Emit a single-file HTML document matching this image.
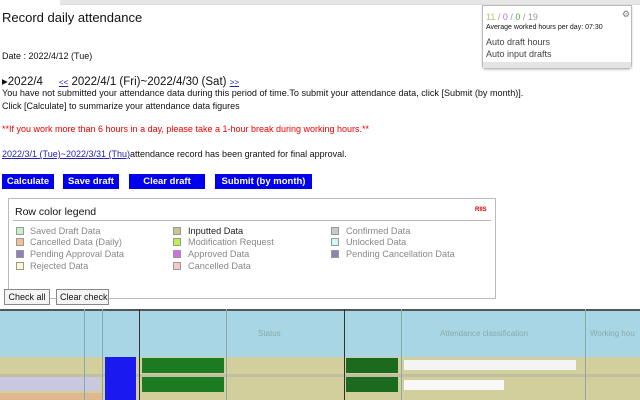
<!DOCTYPE html>
<html><head><meta charset="utf-8"><style>
*{margin:0;padding:0;box-sizing:border-box}
body{width:640px;height:400px;overflow:hidden;background:#fff;font-family:"Liberation Sans",sans-serif;color:#111;position:relative;font-size:9px}
.a{position:absolute;white-space:nowrap}
.btn{position:absolute;background:#0000ee;color:#fff;font-weight:bold;font-size:9.5px;text-align:center;line-height:15px;height:15px;white-space:nowrap}
.sw{position:absolute;width:8px;height:8px;border:1px solid #999}
.lt{position:absolute;color:#888;font-size:9.2px;white-space:nowrap}
.cb{position:absolute;border:1px solid #888;background:#f4f4f4;font-size:9px;line-height:14px;height:16px;padding:0 3px;white-space:nowrap;text-align:center}
.v{position:absolute;top:309px;width:1px;height:91px;background:#8aa}
a{color:#22b;text-decoration:underline}
</style></head><body>
<div class="a" style="left:60px;top:0;width:580px;height:5px;background:#e6e6e6;border-bottom:1px solid #ddd"></div>
<div class="a" style="left:482px;top:5px;width:150px;height:64px;border:1px solid #bbb;border-radius:0 0 4px 4px;background:#fff;box-shadow:0 1px 2px #ccc"></div>
<div class="a" style="left:483px;top:62px;width:148px;height:6px;background:#e4e4e4"></div>
<div class="a" style="left:486px;top:12px;font-size:9px;color:#999"><span style="color:#aac87a">11</span> / <span style="color:#b070e0">0</span> / <span style="color:#5a5">0</span> / 19</div>
<div class="a" style="left:622px;top:9px;font-size:9px;color:#777">⚙</div>
<div class="a" style="left:486px;top:24px;font-size:7px">Average worked hours per day: 07:30</div>
<div class="a" style="left:486px;top:37px;font-size:9px;color:#444">Auto draft hours</div>
<div class="a" style="left:486px;top:49px;font-size:9px;color:#444">Auto input drafts</div>

<div class="a" style="left:2px;top:10px;font-size:13px">Record daily attendance</div>
<div class="a" style="left:2px;top:51px;font-size:9px">Date : 2022/4/12 (Tue)</div>
<div class="a" style="left:2px;top:74px;font-size:11.5px">▸2022/4 &nbsp;&nbsp;&nbsp; <a style="font-size:8px">&lt;&lt;</a> 2022/4/1 (Fri)~2022/4/30 (Sat) <a style="font-size:8px">&gt;&gt;</a></div>
<div class="a" style="left:2px;top:88px;font-size:9.1px">You have not submitted your attendance data during this period of time.To submit your attendance data, click [Submit (by month)].</div>
<div class="a" style="left:2px;top:101px">Click [Calculate] to summarize your attendance data figures</div>
<div class="a" style="left:2px;top:124px;color:#e00">**If you work more than 6 hours in a day, please take a 1-hour break during working hours.**</div>
<div class="a" style="left:2px;top:149px"><a>2022/3/1 (Tue)~2022/3/31 (Thu)</a>attendance record has been granted for final approval.</div>

<div class="btn" style="left:2px;top:174px;width:52px">Calculate</div>
<div class="btn" style="left:63px;top:174px;width:56px">Save draft</div>
<div class="btn" style="left:129px;top:174px;width:76px">Clear draft</div>
<div class="btn" style="left:215px;top:174px;width:97px">Submit (by month)</div>

<div class="a" style="left:8px;top:198px;width:488px;height:101px;border:1px solid #bbb"></div>
<div class="a" style="left:15px;top:206px;font-size:10.5px">Row color legend</div>
<div class="a" style="left:475px;top:207px;font-size:6px;color:#c00;font-weight:bold">RIIS</div>
<div class="a" style="left:13px;top:220px;width:478px;height:1px;background:#bbb"></div>
<div class="sw" style="left:16px;top:227px;background:#c8f0c8"></div><div class="lt" style="left:30px;top:226px">Saved Draft Data</div>
<div class="sw" style="left:16px;top:238px;background:#f0c090"></div><div class="lt" style="left:30px;top:237px">Cancelled Data (Daily)</div>
<div class="sw" style="left:16px;top:250px;background:#9080c0"></div><div class="lt" style="left:30px;top:249px">Pending Approval Data</div>
<div class="sw" style="left:16px;top:262px;background:#fff8c8"></div><div class="lt" style="left:30px;top:261px">Rejected Data</div>
<div class="sw" style="left:173px;top:227px;background:#c8c490"></div><div class="lt" style="left:188px;top:226px;color:#222">Inputted Data</div>
<div class="sw" style="left:173px;top:238px;background:#c0f050"></div><div class="lt" style="left:188px;top:237px">Modification Request</div>
<div class="sw" style="left:173px;top:250px;background:#d070e0"></div><div class="lt" style="left:188px;top:249px">Approved Data</div>
<div class="sw" style="left:173px;top:262px;background:#f8c8c8"></div><div class="lt" style="left:188px;top:261px">Cancelled Data</div>
<div class="sw" style="left:331px;top:227px;background:#c8c8c8"></div><div class="lt" style="left:346px;top:226px">Confirmed Data</div>
<div class="sw" style="left:331px;top:238px;background:#d0f8f8"></div><div class="lt" style="left:346px;top:237px">Unlocked Data</div>
<div class="sw" style="left:331px;top:250px;background:#9080b8"></div><div class="lt" style="left:346px;top:249px">Pending Cancellation Data</div>

<div class="cb" style="left:4px;top:289px;width:46px">Check all</div>
<div class="cb" style="left:56px;top:289px;width:53px">Clear check</div>

<div class="a" style="left:0;top:309px;width:640px;height:48px;background:#a8d6e4;border-top:2px solid #555"></div>
<div class="a" style="left:258px;top:329px;color:#8aa;font-size:8px">Status</div>
<div class="a" style="left:440px;top:329px;color:#8aa;font-size:8px">Attendance classification</div>
<div class="a" style="left:590px;top:329px;color:#8aa;font-size:8px">Working hou</div>
<div class="a" style="left:0;top:357px;width:640px;height:43px;background:#d2cf9c"></div>
<div class="a" style="left:0;top:374px;width:640px;height:3px;background:#c0c0a0"></div>
<div class="a" style="left:0;top:393px;width:102px;height:7px;background:#e0b890"></div>
<div class="a" style="left:105px;top:357px;width:31px;height:43px;background:#1a1af0"></div>
<div class="a" style="left:142px;top:358px;width:82px;height:15px;background:#1c7a22"></div>
<div class="a" style="left:142px;top:377px;width:82px;height:15px;background:#1c7a22"></div>
<div class="a" style="left:346px;top:358px;width:52px;height:15px;background:#1c6a1e"></div>
<div class="a" style="left:346px;top:377px;width:52px;height:15px;background:#1c6a1e"></div>
<div class="a" style="left:404px;top:360px;width:172px;height:10px;background:#f4f4f4"></div>
<div class="a" style="left:404px;top:380px;width:100px;height:10px;background:#f8f8f8"></div>
<div class="a" style="left:0;top:377px;width:100px;height:14px;background:#c8c8e0"></div>
<div class="v" style="left:84px"></div><div class="v" style="left:102px"></div><div class="v" style="left:139px;background:#333"></div><div class="v" style="left:226px"></div><div class="v" style="left:344px;background:#333"></div><div class="v" style="left:401px"></div><div class="v" style="left:585px"></div>
</body></html>
